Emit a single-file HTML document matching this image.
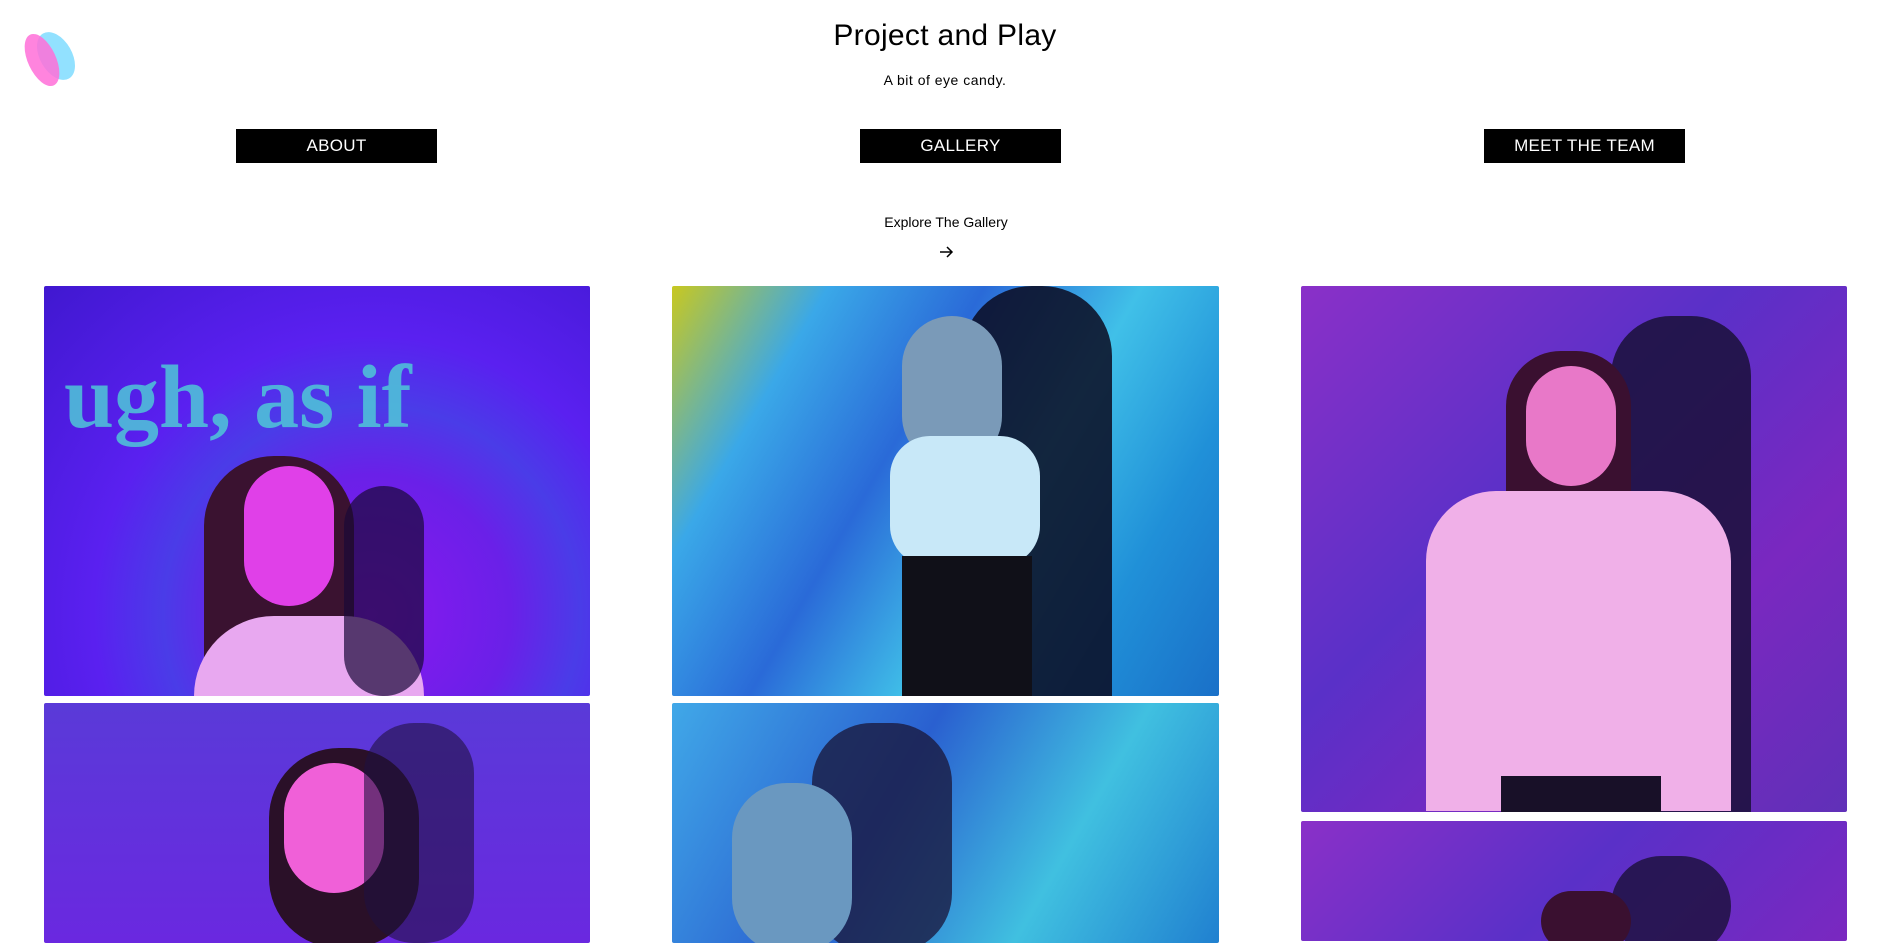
<!DOCTYPE html>
<html><head><meta charset="utf-8"><style>
*{margin:0;padding:0;box-sizing:border-box}
html,body{width:1884px;height:927px;overflow:hidden;background:#fff;font-family:"Liberation Sans",sans-serif;color:#000}
.abs{position:absolute}
h1{position:absolute;left:0;width:1890px;top:19px;text-align:center;font-weight:400;font-size:30px;letter-spacing:0.3px}
.sub{position:absolute;left:0;width:1890px;top:72px;text-align:center;font-size:14px;letter-spacing:0.5px}
.btn{position:absolute;top:129px;height:34px;width:201px;background:#000;color:#fff;font-size:17px;text-align:center;line-height:34px;letter-spacing:0.3px}
.exp{position:absolute;left:0;width:1892px;top:214px;text-align:center;font-size:14px}
.img{position:absolute;border-radius:2px;overflow:hidden}
.img div{position:absolute}
</style></head><body>
<svg class="abs" style="left:14px;top:26px" width="70" height="66" viewBox="0 0 70 66">
<ellipse cx="42" cy="30" rx="16" ry="26" transform="rotate(-30 42 30)" fill="#7fdcff" opacity=".85"/>
<ellipse cx="28" cy="34" rx="14" ry="28" transform="rotate(-25 28 34)" fill="#ff6fd8" opacity=".85"/>
</svg>
<h1>Project and Play</h1>
<div class="sub">A bit of eye candy.</div>
<div class="btn" style="left:236px">ABOUT</div>
<div class="btn" style="left:860px">GALLERY</div>
<div class="btn" style="left:1484px">MEET THE TEAM</div>
<div class="exp">Explore The Gallery</div>
<svg class="abs" style="left:938px;top:244px" width="16" height="16" viewBox="0 0 16 16"><path d="M2 8H14M9 3L14 8L9 13" stroke="#000" stroke-width="1.5" fill="none"/></svg>

<div class="img" style="left:44px;top:286px;width:546px;height:410px;background:radial-gradient(ellipse at 60% 80%,#8a18f0 0%,#6a20e8 30%,#4a3ce8 45%,#5a20f0 60%,#4018d0 100%)">
 <div style="left:20px;top:60px;font-size:90px;font-weight:700;color:#4fc8d8;font-family:'Liberation Serif',serif;opacity:.85">ugh, as if</div>
 <div style="left:160px;top:170px;width:150px;height:260px;border-radius:70px 70px 20px 20px;background:#3a1230"></div>
 <div style="left:200px;top:180px;width:90px;height:140px;border-radius:45px;background:#e040e8"></div>
 <div style="left:150px;top:330px;width:230px;height:120px;border-radius:80px 80px 0 0;background:#e8a8f0"></div>
 <div style="left:300px;top:200px;width:80px;height:210px;border-radius:40px;background:#1a0838;opacity:.7"></div>
</div>
<div class="img" style="left:44px;top:703px;width:546px;height:240px;background:linear-gradient(180deg,#5a3ad8,#6a28e0)">
 <div style="left:225px;top:45px;width:150px;height:200px;border-radius:70px;background:#2a1028"></div>
 <div style="left:240px;top:60px;width:100px;height:130px;border-radius:50px;background:#f060d8"></div>
 <div style="left:320px;top:20px;width:110px;height:220px;border-radius:50px;background:#201040;opacity:.6"></div>
</div>

<div class="img" style="left:672px;top:286px;width:547px;height:410px;background:linear-gradient(120deg,#c8c820 0%,#3aa8e8 20%,#2a6ad8 40%,#40c0e8 60%,#2090d8 80%,#1a70c8 100%)">
 <div style="left:290px;top:0px;width:150px;height:410px;border-radius:70px 70px 0 0;background:#0a0a20;opacity:.85"></div>
 <div style="left:230px;top:30px;width:100px;height:150px;border-radius:50px;background:#7a9ab8"></div>
 <div style="left:218px;top:150px;width:150px;height:130px;border-radius:40px;background:#c8e8f8"></div>
 <div style="left:230px;top:270px;width:130px;height:140px;background:#101018"></div>
</div>
<div class="img" style="left:672px;top:703px;width:547px;height:240px;background:linear-gradient(120deg,#40a8e8,#2a60d0 40%,#40c0e0 70%,#2080d0)">
 <div style="left:140px;top:20px;width:140px;height:230px;border-radius:60px;background:#1a1a40;opacity:.8"></div>
 <div style="left:60px;top:80px;width:120px;height:170px;border-radius:55px;background:#6a98c0"></div>
</div>

<div class="img" style="left:1301px;top:286px;width:546px;height:526px;background:linear-gradient(135deg,#8a30c8,#5a30c8 40%,#7a28c0 70%,#6030b8)">
 <div style="left:310px;top:30px;width:140px;height:500px;border-radius:60px 60px 0 0;background:#1a1038;opacity:.85"></div>
 <div style="left:205px;top:65px;width:125px;height:230px;border-radius:55px;background:#3a1030"></div>
 <div style="left:225px;top:80px;width:90px;height:120px;border-radius:45px;background:#e878c8"></div>
 <div style="left:125px;top:205px;width:305px;height:320px;border-radius:70px 70px 0 0;background:#f0b0e8"></div>
 <div style="left:200px;top:490px;width:160px;height:40px;background:#181028"></div>
</div>
<div class="img" style="left:1301px;top:821px;width:546px;height:120px;background:linear-gradient(135deg,#8a30c8,#5a30c8 50%,#7a28c0)">
 <div style="left:310px;top:35px;width:120px;height:100px;border-radius:50px;background:#1a1038;opacity:.8"></div>
 <div style="left:240px;top:70px;width:90px;height:60px;border-radius:45px;background:#3a1030"></div>
</div>
</body></html>
